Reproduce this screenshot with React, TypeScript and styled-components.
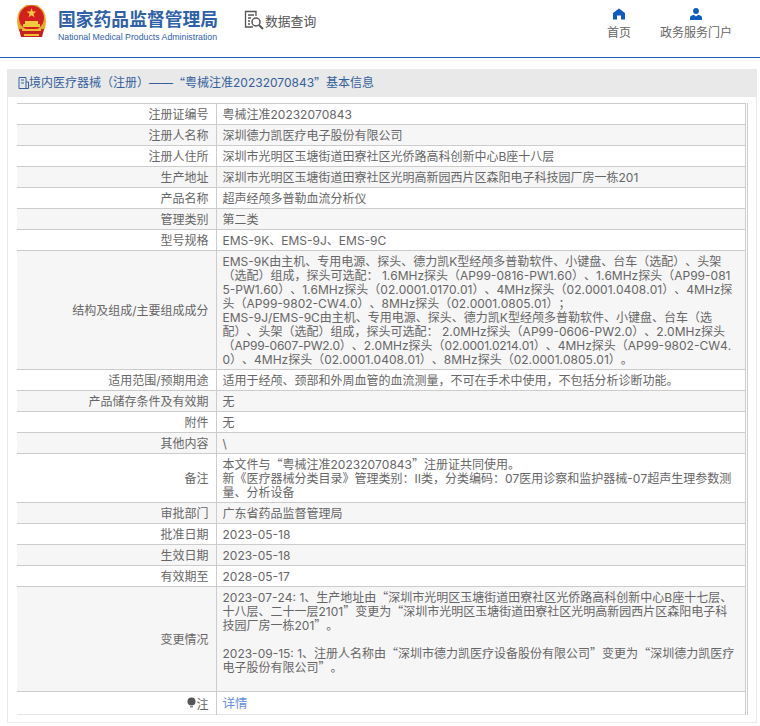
import React from "react";
import styled, { createGlobalStyle } from "styled-components";

const Global = createGlobalStyle`
  html, body { margin: 0; padding: 0; background: #fff; }
  body { font-family: Inter, "Noto Sans CJK SC", sans-serif; font-size: 12px; color: #666; text-spacing-trim: space-all; font-kerning: none; }
`;
const Page = styled.div`width: 760px; height: 726px; overflow: hidden; background: #fff;`;
const Header = styled.header`
  height: 57px; display: flex; align-items: flex-start; border-bottom: 1.5px solid #1a5fb0;
  box-sizing: content-box;
`;
const Logo = styled.div`display: flex; align-items: flex-start; padding: 3px 0 0 15px; width: 229px;`;
const LogoText = styled.div`margin: 3px 0 0 10px; display: flex; flex-direction: column;`;
const LogoCn = styled.div`font: bold 17.8px/24px "Noto Sans CJK SC", sans-serif; color: #2f60a8; white-space: nowrap;`;
const LogoEn = styled.div`font: 8.75px/12px "Liberation Sans", sans-serif; color: #2f60a8; white-space: nowrap; margin-top: 1px;`;
const Query = styled.div`display: flex; align-items: center; gap: 0; margin: 10px 0 0 0; font: 12.8px/18px "Noto Sans CJK SC", sans-serif; color: #555;`;
const Nav = styled.nav`margin-left: auto; display: flex; gap: 29px; padding: 8px 28px 0 0;`;
const NavItem = styled.div`display: flex; flex-direction: column; align-items: center; gap: 4px; font: 12px/16px "Noto Sans CJK SC", sans-serif; color: #666;`;
const Dots = styled.div`
  height: 4px; background-image: radial-gradient(#d8dde2 0.5px, transparent 0.6px); background-size: 2px 2px;
`;
const Panel = styled.section`
  margin: 7px 3px 0 7px; border: 1px solid #e9e9e9; border-top: 0; height: 654px; box-sizing: border-box;
`;
const PanelTitle = styled.div`
  height: 28px; background: #e9e9e9; display: flex; align-items: center; padding-left: 10px;
  font: 12px/28px Inter, "Noto Sans CJK SC", sans-serif; color: #33609c; white-space: pre;
`;
const TableWrap = styled.div`margin: 6px 8px 0 9px; border-right: 3px double #ccc;`;
const Table = styled.table`
  width: 100%; border-collapse: collapse; table-layout: fixed; line-height: 14px; font-size: 12px;
`;
const Row = styled.tr<{ $shade?: boolean }>`
  background: ${(p) => (p.$shade ? "#f6f6f6" : "#fff")};
  border-top: 1px solid #ccc;
  &:last-child { border-bottom: 1px solid #e6e6e6; }
`;
const Label = styled.td`
  width: 199px; box-sizing: border-box; text-align: right; padding: 4px 7px 2px 0; border-right: 1px solid #ccc; color: #666; vertical-align: middle;
`;
const Value = styled.td`
  padding: 4px 10px 2px 6px; color: #666; word-break: break-all; vertical-align: middle;
`;
const Note = styled.div`line-height: 14px;`;
const Spacer = styled.div`height: 14px;`;
const Link = styled.span`color: #5f8fe0; font-size: 12.5px; line-height: 16px; display: inline-block;`;
const Quote = styled.span`font-family: "Noto Sans CJK SC", sans-serif; line-height: 0;`;
const Tight = styled.span`letter-spacing: -0.25px;`;

/* The curly quotes are full-width in the reference, so they take the CJK face. */
function q(text: string): React.ReactNode {
  return text.split(/([“”])/).map((part, i) =>
    part === "“" || part === "”" ? <Quote key={i}>{part}</Quote> : part
  );
}

function Emblem() {
  return (
    <svg width="33" height="36" viewBox="0 0 33 36">
      <path d="M5 7 C1 13 1 24 6 31 L27 31 C32 24 32 13 28 7 L22 2 H11 Z" fill="#e8a92c" />
      <circle cx="16.5" cy="15" r="12.5" fill="#d3201f" />
      <path d="M16.5 5l1.3 3.4 3.6.1-2.9 2.2 1 3.5-3-2-3 2 1-3.5-2.9-2.2 3.6-.1z" fill="#f3c83c" />
      <path d="M8 21h17v3H8z M10 18h13v3H10z" fill="#f3c83c" />
      <path d="M4 26h25l-2 8H6z" fill="#c8201c" />
      <path d="M7 26h19v2H7z M9 31h15v2H9z" fill="#f1bd35" />
    </svg>
  );
}
function QueryIcon() {
  return (
    <svg width="21" height="21" viewBox="0 0 21 21" fill="none" stroke="#555" strokeWidth="1.3">
      <path d="M9 17H1.5V1.5H12V6" />
      <path d="M4 5h6M4 8h3M4 11h2M4 14h2" />
      <circle cx="12" cy="12" r="4" strokeWidth="1.5" />
      <path d="M15 15l4 4" strokeWidth="2" />
    </svg>
  );
}
function HomeIcon() {
  return (
    <svg width="12" height="12" viewBox="0 0 12 12" fill="#0c5bbd">
      <path d="M6 0.5 L12 5 V11.5 H8 V7.5 H4 V11.5 H0 V5 Z" />
    </svg>
  );
}
function UserIcon() {
  return (
    <svg width="12" height="12" viewBox="0 0 12 12" fill="#0c5bbd">
      <circle cx="6" cy="3" r="2.9" />
      <path d="M0 12 V9.5 C0 8 2 7.2 3.8 6.8 L6 8.5 L8.2 6.8 C10 7.2 12 8 12 9.5 V12 Z" />
    </svg>
  );
}
function DocIcon() {
  return (
    <svg width="11" height="12" viewBox="0 0 11 12" fill="none" stroke="#33609c" strokeWidth="1">
      <path d="M1 .5H8V11.5H1Z M3 3H6M3 6H6M8 5h2.5v6.5H8" />
    </svg>
  );
}
function BulbIcon() {
  return (
    <svg width="9" height="12" viewBox="0 0 9 12" fill="#555">
      <circle cx="4.5" cy="4.5" r="4" />
      <path d="M3 9h3v1.5H3z" fill="#888" />
    </svg>
  );
}

const rows: [string, React.ReactNode][] = [
  ["注册证编号", "粤械注准20232070843"],
  ["注册人名称", "深圳德力凯医疗电子股份有限公司"],
  ["注册人住所", "深圳市光明区玉塘街道田寮社区光侨路高科创新中心B座十八层"],
  ["生产地址", "深圳市光明区玉塘街道田寮社区光明高新园西片区森阳电子科技园厂房一栋201"],
  ["产品名称", "超声经颅多普勒血流分析仪"],
  ["管理类别", "第二类"],
  ["型号规格", "EMS-9K、EMS-9J、EMS-9C"],
  ["结构及组成/主要组成成分", (
    <>
      <Note>EMS-9K由主机、专用电源、探头、德力凯K型经颅多普勒软件、小键盘、台车（选配）、头架（选配）组成，探头可选配： 1.6MHz探头（AP99-0816-PW1.60）、1.6MHz探头（AP99-0815-PW1.60）、1.6MHz探头（02.0001.0170.01）、4MHz探头（02.0001.0408.01）、4MHz探头（AP99-9802-CW4.0）、8MHz探头（02.0001.0805.01）；</Note>
      <Note>EMS-9J/EMS-9C由主机、专用电源、探头、德力凯K型经颅多普勒软件、小键盘、台车（选配）、头架（选配）组成，探头可选配： 2.0MHz探头（AP99-0606-PW2.0）、2.0MHz探头（<Tight>AP99-0607-PW2.0</Tight>）、2.0MHz探头（<Tight>02.0001.0214.01</Tight>）、4MHz探头（AP99-9802-CW4.0）、4MHz探头（02.0001.0408.01）、8MHz探头（02.0001.0805.01）。</Note>
    </>
  )],
  ["适用范围/预期用途", "适用于经颅、颈部和外周血管的血流测量，不可在手术中使用，不包括分析诊断功能。"],
  ["产品储存条件及有效期", "无"],
  ["附件", "无"],
  ["其他内容", "\\"],
  ["备注", (
    <>
      <Note>{q("本文件与“粤械注准20232070843”注册证共同使用。")}</Note>
      <Note>新《医疗器械分类目录》管理类别：II类，分类编码：07医用诊察和监护器械-07超声生理参数测量、分析设备</Note>
    </>
  )],
  ["审批部门", "广东省药品监督管理局"],
  ["批准日期", "2023-05-18"],
  ["生效日期", "2023-05-18"],
  ["有效期至", "2028-05-17"],
  ["变更情况", (
    <>
      <Note>{q("2023-07-24: 1、生产地址由“深圳市光明区玉塘街道田寮社区光侨路高科创新中心B座十七层、十八层、二十一层2101”变更为“深圳市光明区玉塘街道田寮社区光明高新园西片区森阳电子科技园厂房一栋201”。")}</Note>
      <Spacer />
      <Note>{q("2023-09-15: 1、注册人名称由“深圳市德力凯医疗设备股份有限公司”变更为“深圳德力凯医疗电子股份有限公司”。")}</Note>
      <Spacer />
    </>
  )],
];

export default function App() {
  return (
    <Page>
      <Global />
      <Header>
        <Logo>
          <Emblem />
          <LogoText>
            <LogoCn>国家药品监督管理局</LogoCn>
            <LogoEn>National Medical Products Administration</LogoEn>
          </LogoText>
        </Logo>
        <Query><QueryIcon />数据查询</Query>
        <Nav>
          <NavItem><HomeIcon />首页</NavItem>
          <NavItem><UserIcon />政务服务门户</NavItem>
        </Nav>
      </Header>
      <Dots />
      <Panel>
        <PanelTitle><DocIcon />境内医疗器械（注册）——{q("“粤械注准20232070843”")}基本信息</PanelTitle>
        <TableWrap>
          <Table>
            <tbody>
              {rows.map(([l, v], i) => (
                <Row key={l} $shade={i % 2 === 1}>
                  <Label>{l}</Label>
                  <Value>{v}</Value>
                </Row>
              ))}
              <Row>
                <Label><BulbIcon />注</Label>
                <Value><Link>详情</Link></Value>
              </Row>
            </tbody>
          </Table>
        </TableWrap>
      </Panel>
    </Page>
  );
}
